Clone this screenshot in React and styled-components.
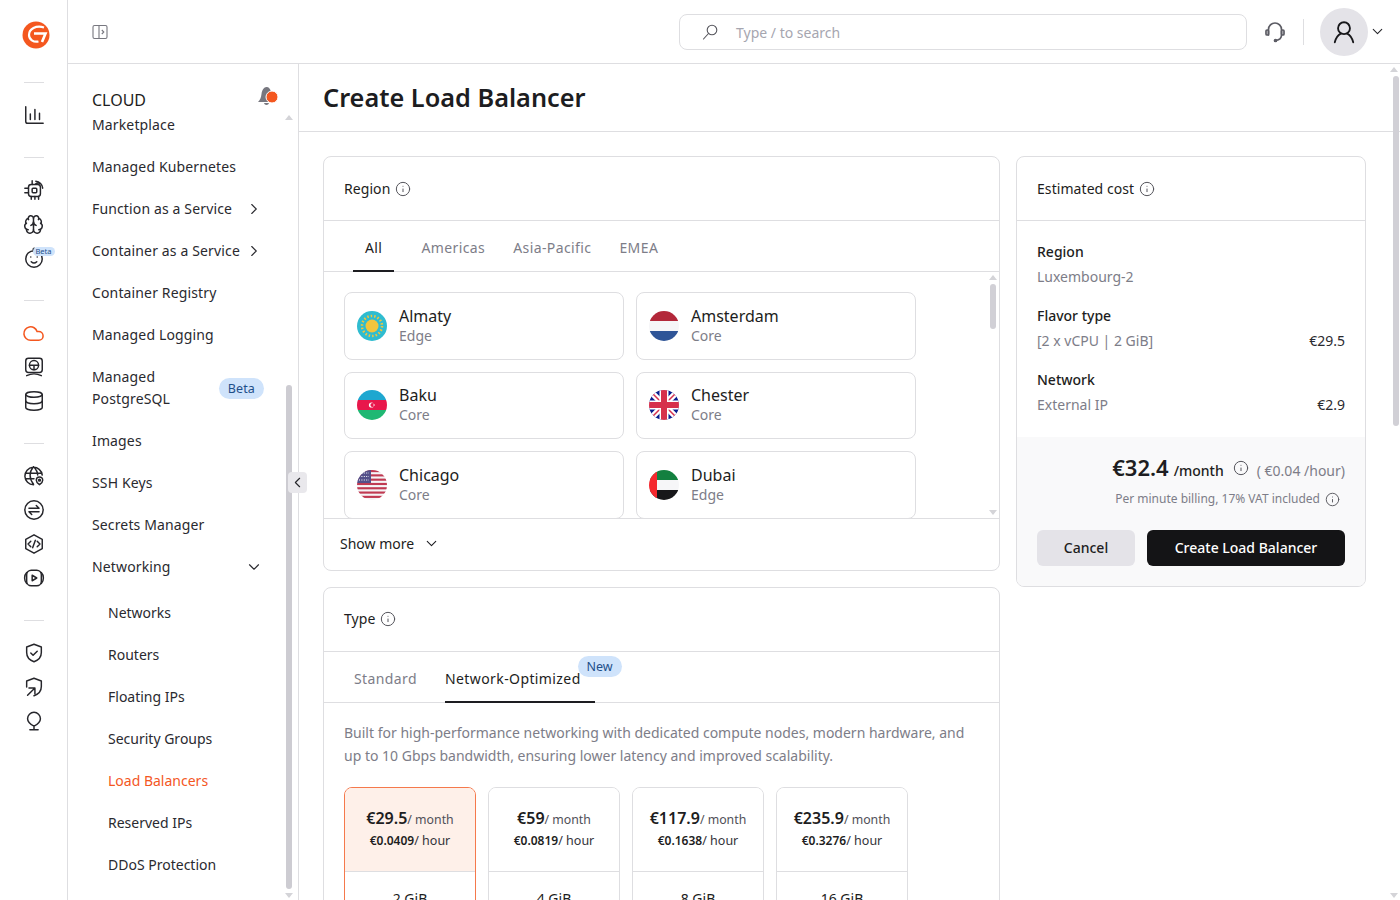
import React from "react";
import styled, { createGlobalStyle } from "styled-components";
import {
  Brain,
  ChevronDown,
  ChevronLeft,
  ChevronRight,
  Cloud,
  Database,
  Info,
} from "lucide-react";

const orange = "#f4571f";
const ink = "#1d1d21";
const muted = "#7d7d88";
const line = "#dedee1";

const GlobalStyle = createGlobalStyle`
  html, body { margin: 0; height: 100%; overflow: hidden; }
  body { font-family: "Noto Sans", "Open Sans", sans-serif; color: ${ink}; background: #fff; }
  * { box-sizing: border-box; }
`;

const Glyph = ({ children, size = 22, color = "#26262b", width = 1.6 }) => (
  <svg width={size} height={size} viewBox="0 0 24 24" fill="none" stroke={color} strokeWidth={width} strokeLinecap="round" strokeLinejoin="round">
    {children}
  </svg>
);

const railGroups = [
  [
    <Glyph key="chart"><path d="M3 3v16a2 2 0 0 0 2 2h17M8 17v-6M13 17V6M18 17v-7" /></Glyph>,
  ],
  [
    <Glyph key="chip"><rect x="6" y="6" width="13" height="13" rx="3" /><rect x="10" y="10" width="5" height="5" rx="1" /><path d="M2 10h4M2 15h4M9 19v3M13 19v3M17 19v3M10 6V2M14 2.500a8 8 0 0 1 7.500 7.500M14 5a5 5 0 0 1 5 0" /></Glyph>,
    <Brain key="brain" size={21} color="#26262b" strokeWidth={1.7} />,
    <Glyph key="baby"><circle cx="12" cy="13" r="9" /><path d="M9 16c2 2 4 2 6 0M8.500 11h.01M15.500 11h.01M12 4c-2-2 0-3 1-2" /></Glyph>,
  ],
  [
    <Cloud key="cloud" size={23} color={orange} strokeWidth={1.6} />,
    <Glyph key="monitor"><rect x="3" y="2.500" width="18" height="15.500" rx="3" /><circle cx="12" cy="10" r="5" /><path d="M7 10h10M12 10v5M4 21.500c5-2.500 11-2.500 16 0" /></Glyph>,
    <Database key="database" size={22} color="#26262b" strokeWidth={1.6} />,
  ],
  [
    <Glyph key="globe"><path d="M21 11a9.500 9.500 0 1 0-9.500 10.500M2.500 9h18M2.500 15H12M11.500 2c-5 5.500-5 13 0 19M11.500 2c3 3 4.500 6.500 4.500 9" /><path d="M18 21.500s-3.500-2.500-3.500-5a3.500 3.500 0 0 1 7 0c0 2.500-3.500 5-3.500 5z" /><circle cx="18" cy="16.500" r="1" /></Glyph>,
    <Glyph key="swap"><circle cx="12" cy="12" r="10" /><path d="M6.500 10h11l-3-3M17.500 14h-11l3 3" /></Glyph>,
    <Glyph key="code"><path d="M12 2l9 5v10l-9 5-9-5V7z" /><path d="M8.500 9l-3 3 3 3M15.500 9l3 3-3 3M13.500 8l-3 8" /></Glyph>,
    <Glyph key="play"><rect x="4" y="3.500" width="16" height="17" rx="5" /><path d="M10 9v6l5-3zM4 6c-3 3-3 9 0 12M20 6c3 3 3 9 0 12" /></Glyph>,
  ],
  [
    <Glyph key="shield"><path d="M12 2.500l8 3v6c0 5-3.500 8.500-8 10-4.500-1.500-8-5-8-10v-6z" /><path d="M8.500 12l2.500 2.500 4.500-4.500" /></Glyph>,
    <Glyph key="share"><path d="M4 12V5.500l8-3 8 3v6c0 5-3.500 8.500-8 10" /><path d="M5 21l8-8M6.500 13H13v6.500" /></Glyph>,
    <Glyph key="bulb"><path d="M12 2.500a7 7 0 0 0-7 7c0 3.500 3 6 7 8 4-2 7-4.500 7-8a7 7 0 0 0-7-7zM12 17.500v4M7.500 21.500h9" /></Glyph>,
  ],
];

const menu = [
  { label: "Managed Kubernetes" },
  { label: "Function as a Service", arrow: true },
  { label: "Container as a Service", arrow: true },
  { label: "Container Registry" },
  { label: "Managed Logging" },
  { label: "Managed PostgreSQL", beta: true },
  { label: "Images" },
  { label: "SSH Keys" },
  { label: "Secrets Manager" },
  { label: "Networking", open: true },
];

const subMenu = ["Networks", "Routers", "Floating IPs", "Security Groups", "Load Balancers", "Reserved IPs", "DDoS Protection"];

const KZ = () => (
  <svg viewBox="0 0 30 30" width="30" height="30">
    <rect width="30" height="30" fill="#2fbcd0" />
    <circle cx="15" cy="15" r="10" fill="none" stroke="#f2c53d" strokeWidth="2.500" strokeDasharray="1.500 2" />
    <circle cx="15" cy="15" r="6.500" fill="#f2c53d" />
  </svg>
);
const NL = () => (
  <svg viewBox="0 0 30 30" width="30" height="30">
    <rect width="30" height="10" fill="#b3283a" />
    <rect y="10" width="30" height="10" fill="#f6f6f8" />
    <rect y="20" width="30" height="10" fill="#2f5597" />
  </svg>
);
const AZ = () => (
  <svg viewBox="0 0 30 30" width="30" height="30">
    <rect width="30" height="10" fill="#1ea7d0" />
    <rect y="10" width="30" height="10" fill="#e8174b" />
    <rect y="20" width="30" height="10" fill="#1fb873" />
    <circle cx="14.500" cy="15" r="2.600" fill="#fff" />
    <circle cx="15.500" cy="15" r="2.100" fill="#e8174b" />
    <circle cx="17" cy="15" r="0.800" fill="#fff" />
  </svg>
);
const GB = () => (
  <svg viewBox="0 0 30 30" width="30" height="30">
    <rect width="30" height="30" fill="#0a1d8f" />
    <path d="M0 0l30 30M30 0L0 30" stroke="#fff" strokeWidth="6" />
    <path d="M0 0l30 30M30 0L0 30" stroke="#d6314e" strokeWidth="1.500" />
    <path d="M15 0v30M0 15h30" stroke="#fff" strokeWidth="9" />
    <path d="M15 0v30M0 15h30" stroke="#d6304c" strokeWidth="6" />
  </svg>
);
const US = () => (
  <svg viewBox="0 0 30 30" width="30" height="30">
    <rect width="30" height="30" fill="#f5f5f7" />
    {[0, 1, 2, 3, 4, 5, 6, 7].map((i) => (
      <rect key={i} y={i * 4.3} width="30" height="2.150" fill="#c03a52" />
    ))}
    <rect width="14" height="13" fill="#55508a" />
    <path d="M2 3h10M2 6.500h10M2 10h10" stroke="#fff" strokeWidth="1.200" strokeDasharray="1 1.400" />
  </svg>
);
const AE = () => (
  <svg viewBox="0 0 30 30" width="30" height="30">
    <rect width="30" height="10" fill="#13803f" />
    <rect y="10" width="30" height="10" fill="#f6f6f8" />
    <rect y="20" width="30" height="10" fill="#17171a" />
    <rect width="8" height="30" fill="#f5282e" />
  </svg>
);

const regions = [
  { name: "Almaty", tier: "Edge", Flag: KZ },
  { name: "Amsterdam", tier: "Core", Flag: NL },
  { name: "Baku", tier: "Core", Flag: AZ },
  { name: "Chester", tier: "Core", Flag: GB },
  { name: "Chicago", tier: "Core", Flag: US },
  { name: "Dubai", tier: "Edge", Flag: AE },
];

const plans = [
  { month: "€29.5", hour: "€0.0409", ram: "2 GiB", active: true },
  { month: "€59", hour: "€0.0819", ram: "4 GiB" },
  { month: "€117.9", hour: "€0.1638", ram: "8 GiB" },
  { month: "€235.9", hour: "€0.3276", ram: "16 GiB" },
];

const costs = [
  { title: "Region", value: "Luxembourg-2" },
  { title: "Flavor type", value: "[2 x vCPU | 2 GiB]", price: "€29.5" },
  { title: "Network", value: "External IP", price: "€2.9" },
];

export default function App() {
  return (
    <Page>
      <GlobalStyle />
      <Rail>
        <Logo>
          <svg width="30" height="30" viewBox="0 0 30 30">
            <circle cx="15" cy="15" r="13.500" fill={orange} />
            <path d="M23 7.500C15 5 8 9 8 15c0 4.500 4.500 7.500 9.500 6.500" stroke="#fff" strokeWidth="2.200" fill="none" />
            <path d="M13 13.500h11.500L21 22" stroke="#fff" strokeWidth="2.600" fill="none" />
          </svg>
        </Logo>
        {railGroups.map((group, g) => (
          <React.Fragment key={g}>
            <RailRule />
            {group.map((icon, i) => (
              <RailIcon key={i}>
                {icon}
                {g === 1 && i === 2 && <RailBeta>Beta</RailBeta>}
              </RailIcon>
            ))}
          </React.Fragment>
        ))}
      </Rail>
      <Column>
        <TopBar>
          <svg width="16" height="16" viewBox="0 0 16 16" fill="none" stroke="#77777f" strokeWidth="1.100">
            <rect x="1" y="1.500" width="14" height="13" rx="1.500" />
            <path d="M7 1.500v13M9.800 6l2 2-2 2" />
          </svg>
          <SearchBox>
            <svg width="18" height="18" viewBox="0 0 18 18" fill="none" stroke="#55555c" strokeWidth="1.100" strokeLinecap="round">
              <circle cx="11" cy="7" r="4.800" />
              <path d="M7.500 10.500L2.500 16" />
            </svg>
            <SearchText>Type / to search</SearchText>
          </SearchBox>
          <Headset>
            <Glyph size={24} color="#5c5c64" width={1.7}>
              <path d="M5.500 15V9.500a6.500 6.500 0 0 1 13 0V15c0 3-2 5-5.500 5.500" />
              <rect x="3" y="10" width="2.500" height="5" rx="1" />
              <rect x="18.500" y="10" width="2.500" height="5" rx="1" />
              <circle cx="12.500" cy="20.500" r="1" />
            </Glyph>
          </Headset>
          <BarRule />
          <Avatar>
            <Glyph size={26} color="#17171a" width={1.7}>
              <circle cx="12" cy="8.500" r="5.500" />
              <path d="M3.500 21.500c1-4 3.500-7 5.500-8M20.500 21.500c-1-4-3.500-7-5.500-8" />
            </Glyph>
          </Avatar>
          <ChevronDown size={17} strokeWidth={1.5} color="#26262b" />
        </TopBar>
        <Body>
          <Sidebar>
            <SideHead>
              CLOUD
              <BellBox>
                <svg width="20" height="20" viewBox="0 0 20 20">
                  <path d="M0 15c2-2 3-4 3.500-8C4 3 6 0 8.500 0s4 2 4.500 5l2 10zM6 16h5c-.5 2.500-4.500 2.500-5 0z" fill="#77777f" />
                  <circle cx="14" cy="10" r="6" fill={orange} stroke="#fff" strokeWidth="1" />
                </svg>
              </BellBox>
            </SideHead>
            <Marketplace>Marketplace</Marketplace>
            {menu.map((item) => (
              <MenuItem key={item.label}>
                <MenuLabel $narrow={item.beta}>{item.label}</MenuLabel>
                {item.arrow && <MenuChevron as={ChevronRight} size={18} strokeWidth={1.5} />}
                {item.beta && <BetaPill>Beta</BetaPill>}
                {item.open && <MenuChevron as={ChevronDown} size={18} strokeWidth={1.5} />}
              </MenuItem>
            ))}
            <SubList>
              {subMenu.map((label) => (
                <SubItem key={label} $active={label === "Load Balancers"}>{label}</SubItem>
              ))}
            </SubList>
            <ScrollArrow $x={217} $y={51} />
            <SideThumb />
            <ScrollArrow $x={217} $y={829} $down />
            <Collapse><ChevronLeft size={17} strokeWidth={1.6} /></Collapse>
          </Sidebar>
          <Main>
            <TitleBar>Create Load Balancer</TitleBar>
            <Content>
              <LeftColumn>
                <Card>
                  <CardHead>Region <InfoIcon size={16} strokeWidth={1.5} /></CardHead>
                  <Tabs $inset={29}>
                    <Tab $active $pad={12} $pull={1}>All</Tab>
                    <Tab>Americas</Tab>
                    <Tab>Asia-Pacific</Tab>
                    <Tab>EMEA</Tab>
                  </Tabs>
                  <RegionScroll>
                    <RegionGrid>
                      {regions.map(({ name, tier, Flag }) => (
                        <RegionCard key={name}>
                          <FlagCircle><Flag /></FlagCircle>
                          <RegionText>
                            <RegionName>{name}</RegionName>
                            <RegionTier>{tier}</RegionTier>
                          </RegionText>
                        </RegionCard>
                      ))}
                    </RegionGrid>
                    <ListArrow $top={3} />
                    <ListThumb />
                    <ListArrow $top={238} $down />
                  </RegionScroll>
                  <ShowMore>Show more <ChevronDown size={17} strokeWidth={1.5} /></ShowMore>
                </Card>
                <Card>
                  <CardHead $lift>Type <InfoIcon size={16} strokeWidth={1.5} /></CardHead>
                  <Tabs $inset={30}>
                    <Tab>Standard</Tab>
                    <BadgedTab $active>
                      Network-Optimized
                      <NewPill>New</NewPill>
                    </BadgedTab>
                  </Tabs>
                  <TypeBody>
                    <Lead>
                      Built for high-performance networking with dedicated compute nodes, modern hardware, and up to 10 Gbps bandwidth, ensuring lower latency and improved scalability.
                    </Lead>
                    <Plans>
                      {plans.map((plan) => (
                        <Plan key={plan.ram} $active={plan.active}>
                          <PlanTop $active={plan.active}>
                            <PlanMonth><strong>{plan.month}</strong>/ month</PlanMonth>
                            <PlanHour><b>{plan.hour}</b>/ hour</PlanHour>
                          </PlanTop>
                          <PlanRam>{plan.ram}</PlanRam>
                        </Plan>
                      ))}
                    </Plans>
                  </TypeBody>
                </Card>
              </LeftColumn>
              <CostCard>
                <CardHead>Estimated cost <InfoIcon size={16} strokeWidth={1.5} /></CardHead>
                <CostList>
                  {costs.map((cost) => (
                    <CostBlock key={cost.title}>
                      <CostTitle>{cost.title}</CostTitle>
                      <CostRow>
                        <span>{cost.value}</span>
                        {cost.price && <CostPrice>{cost.price}</CostPrice>}
                      </CostRow>
                    </CostBlock>
                  ))}
                </CostList>
                <CostFoot>
                  <Total>
                    <TotalValue>€32.4</TotalValue>
                    <TotalUnit>/month</TotalUnit>
                    <Info size={16} strokeWidth={1.5} color="#55555c" />
                    <TotalHour>( €0.04 /hour)</TotalHour>
                  </Total>
                  <Billing>
                    Per minute billing, 17% VAT included
                    <Info size={15} strokeWidth={1.5} color="#55555c" />
                  </Billing>
                  <Actions>
                    <CancelButton>Cancel</CancelButton>
                    <CreateButton>Create Load Balancer</CreateButton>
                  </Actions>
                </CostFoot>
              </CostCard>
            </Content>
            <ScrollArrow $x={1091} $y={3} />
            <MainThumb />
            <ScrollArrow $x={1091} $y={829} $down />
          </Main>
        </Body>
      </Column>
    </Page>
  );
}

const Page = styled.div`
  display: flex;
  width: 100%;
  height: 100vh;
  overflow: hidden;
`;

const Rail = styled.aside`
  flex: 0 0 68px;
  display: flex;
  flex-direction: column;
  align-items: center;
  padding-top: 16px;
  border-right: 1px solid ${line};
`;

const Logo = styled.div`
  height: 41px;
  display: flex;
  align-items: center;
  justify-content: center;
  margin: -2px 0 2px 4px;
`;

const RailRule = styled.div`
  width: 20px;
  height: 1px;
  margin: 25px 0 15px;
  background: ${line};
`;

const RailIcon = styled.div`
  position: relative;
  width: 34px;
  height: 34px;
  display: flex;
  align-items: center;
  justify-content: center;
`;

const RailBeta = styled.span`
  position: absolute;
  top: 6px;
  left: 16px;
  padding: 0 3px;
  border-radius: 5px;
  background: #cfe3fb;
  color: #1e4f8a;
  font-size: 7.5px;
  line-height: 9px;
`;

const Column = styled.div`
  flex: 1;
  min-width: 0;
  display: flex;
  flex-direction: column;
`;

const TopBar = styled.header`
  flex: 0 0 64px;
  display: flex;
  align-items: center;
  padding: 0 14px 0 24px;
  border-bottom: 1px solid ${line};
`;

const SearchBox = styled.div`
  flex: 0 0 568px;
  height: 36px;
  margin: 1px 0 0 571px;
  display: flex;
  align-items: center;
  padding-left: 21px;
  border: 1px solid ${line};
  border-radius: 8px;
`;

const SearchText = styled.span`
  margin-left: 17px;
  font-size: 14px;
  color: #a6a6b0;
`;

const Headset = styled.div`
  display: flex;
  margin-left: 16px;
`;

const BarRule = styled.div`
  width: 1px;
  height: 26px;
  margin: 0 16px;
  background: ${line};
`;

const Avatar = styled.div`
  width: 48px;
  height: 48px;
  margin-right: 1px;
  display: flex;
  align-items: center;
  justify-content: center;
  border-radius: 50%;
  background: #e4e3e8;
`;

const Body = styled.div`
  flex: 1;
  min-height: 0;
  display: flex;
`;

const Sidebar = styled.nav`
  position: relative;
  flex: 0 0 231px;
  padding: 25px 0 0 24px;
  border-right: 1px solid ${line};
  font-size: 14px;
  line-height: 22px;
  color: #2a2a2f;
`;

const SideHead = styled.div`
  position: relative;
  height: 22px;
  font-size: 16px;
  color: ${ink};
`;

const BellBox = styled.span`
  position: absolute;
  top: -2px;
  left: 166px;
`;

const Marketplace = styled.div`
  margin-top: 3px;
  letter-spacing: 0.14px;
`;

const MenuItem = styled.div`
  display: flex;
  align-items: center;
  justify-content: space-between;
  width: 172px;
  margin-top: 20px;
  letter-spacing: 0.14px;
`;

const MenuLabel = styled.span`
  width: ${(p) => (p.$narrow ? "100px" : "auto")};
  white-space: ${(p) => (p.$narrow ? "normal" : "nowrap")};
`;

const MenuChevron = styled.svg`
  margin-right: 1px;
`;

const BetaPill = styled.span`
  padding: 0 9px;
  border-radius: 11px;
  background: #cfe3fb;
  color: #1e4f8a;
  font-size: 12.5px;
  line-height: 21px;
`;

const SubList = styled.div`
  margin-top: 24px;
  padding-left: 16px;
  display: flex;
  flex-direction: column;
  gap: 20px;
`;

const SubItem = styled.div`
  color: ${(p) => (p.$active ? orange : "#2a2a2f")};
`;

const ScrollArrow = styled.span`
  position: absolute;
  left: ${(p) => p.$x}px;
  top: ${(p) => p.$y}px;
  width: 0;
  height: 0;
  border-left: 4px solid transparent;
  border-right: 4px solid transparent;
  ${(p) => (p.$down ? "border-top: 5px solid #d4d4d8;" : "border-bottom: 5px solid #d4d4d8;")}
`;

const SideThumb = styled.span`
  position: absolute;
  left: 218px;
  top: 321px;
  width: 6px;
  height: 504px;
  border-radius: 3px;
  background: #cdccd2;
`;

const Collapse = styled.button`
  position: absolute;
  top: 408px;
  left: 220px;
  width: 19px;
  height: 21px;
  padding: 0;
  display: flex;
  align-items: center;
  justify-content: center;
  border: 0;
  border-radius: 4px;
  background: #e9e8ec;
  color: #26262b;
`;

const Main = styled.main`
  position: relative;
  flex: 1;
  min-width: 0;
  overflow: hidden;
`;

const TitleBar = styled.h1`
  height: 68px;
  margin: 0;
  padding: 0 0 2px 24px;
  display: flex;
  align-items: center;
  border-bottom: 1px solid ${line};
  font-size: 25.3px;
  font-weight: 600;
  color: ${ink};
`;

const Content = styled.div`
  display: flex;
  align-items: flex-start;
  gap: 16px;
  padding: 24px 0 0 24px;
`;

const LeftColumn = styled.div`
  flex: 0 0 677px;
  display: flex;
  flex-direction: column;
  gap: 16px;
`;

const Card = styled.section`
  border: 1px solid ${line};
  border-radius: 8px;
  overflow: hidden;
`;

const CardHead = styled.div`
  height: 64px;
  display: flex;
  align-items: center;
  gap: 5px;
  padding: 0 0 ${(p) => (p.$lift ? "2px" : "0")} 20px;
  border-bottom: 1px solid ${line};
  font-size: 14px;
  letter-spacing: 0.07px;
`;

const InfoIcon = styled(Info)`
  color: #55555c;
`;

const Tabs = styled.div`
  height: 51px;
  display: flex;
  gap: 28px;
  padding-left: ${(p) => p.$inset}px;
  border-bottom: 1px solid ${line};
`;

const Tab = styled.div`
  position: relative;
  height: 51px;
  padding: 3px ${(p) => p.$pad || 0}px 0;
  margin-right: -${(p) => p.$pull || 0}px;
  display: flex;
  align-items: center;
  border-bottom: 2px solid ${(p) => (p.$active ? "#1d1d21" : "transparent")};
  font-size: 14px;
  letter-spacing: 0.4px;
  color: ${(p) => (p.$active ? ink : muted)};
`;

const BadgedTab = styled(Tab)`
  padding-right: 14px;
`;

const NewPill = styled.span`
  position: absolute;
  top: 4px;
  right: -27px;
  padding: 0 9px;
  border-radius: 11px;
  background: #cfe3fb;
  color: #1e4f8a;
  font-size: 12.5px;
  letter-spacing: 0;
  line-height: 21px;
`;

const RegionScroll = styled.div`
  position: relative;
  height: 247px;
  overflow: hidden;
  padding: 20px 0 0 20px;
  border-bottom: 1px solid ${line};
`;

const RegionGrid = styled.div`
  display: grid;
  grid-template-columns: 280px 280px;
  grid-auto-rows: 67.5px;
  gap: 12px;
`;

const RegionCard = styled.div`
  display: flex;
  align-items: center;
  gap: 12px;
  padding-left: 12px;
  border: 1px solid ${line};
  border-radius: 8px;
`;

const RegionText = styled.div`
  padding-bottom: 2px;
`;

const FlagCircle = styled.span`
  width: 30px;
  height: 30px;
  flex: none;
  display: block;
  overflow: hidden;
  border-radius: 50%;
`;

const RegionName = styled.div`
  font-size: 16px;
  line-height: 22px;
  color: ${ink};
`;

const RegionTier = styled.div`
  font-size: 14px;
  line-height: 18px;
  color: ${muted};
`;

const ListArrow = styled.span`
  position: absolute;
  right: 2px;
  top: ${(p) => p.$top}px;
  width: 0;
  height: 0;
  border-left: 4px solid transparent;
  border-right: 4px solid transparent;
  ${(p) => (p.$down ? "border-top: 5px solid #d4d4d8;" : "border-bottom: 5px solid #d4d4d8;")}
`;

const ListThumb = styled.span`
  position: absolute;
  top: 12px;
  right: 3px;
  width: 6px;
  height: 45px;
  border-radius: 3px;
  background: #d1d0d6;
`;

const ShowMore = styled.div`
  height: 51px;
  display: flex;
  align-items: center;
  gap: 9px;
  padding: 0 0 2px 16px;
  font-size: 14px;
`;

const TypeBody = styled.div`
  padding: 19px 20px 0;
`;

const Lead = styled.p`
  margin: 0 0 20px;
  max-width: 630px;
  font-size: 14px;
  line-height: 22.5px;
  color: ${muted};
`;

const Plans = styled.div`
  display: flex;
  gap: 12px;
`;

const Plan = styled.div`
  width: 132px;
  border: 1px solid ${(p) => (p.$active ? "#f5794c" : line)};
  border-radius: 8px;
  overflow: hidden;
`;

const PlanTop = styled.div`
  height: 84px;
  padding-top: 19px;
  text-align: center;
  border-bottom: 1px solid ${line};
  background: ${(p) => (p.$active ? "#fef0e9" : "#fff")};
`;

const PlanMonth = styled.div`
  font-size: 12.3px;
  line-height: 23px;
  color: #4f4f57;

  strong {
    font-size: 16px;
    font-weight: 600;
    color: ${ink};
  }
`;

const PlanHour = styled.div`
  font-size: 12.5px;
  line-height: 20px;
  color: #33333a;

  b {
    font-size: 12px;
    font-weight: 600;
    color: ${ink};
  }
`;

const PlanRam = styled.div`
  padding-top: 17px;
  text-align: center;
  font-size: 14px;
  line-height: 20px;
`;

const CostCard = styled.aside`
  flex: 0 0 350px;
  border: 1px solid ${line};
  border-radius: 8px;
  overflow: hidden;
`;

const CostList = styled.div`
  height: 216px;
  padding: 18px 20px 0;
  display: flex;
  flex-direction: column;
  gap: 14px;
`;

const CostBlock = styled.div`
  font-size: 14px;
  line-height: 25px;
`;

const CostTitle = styled.div`
  color: ${ink};
  font-weight: 500;
`;

const CostRow = styled.div`
  display: flex;
  justify-content: space-between;
  color: ${muted};
`;

const CostPrice = styled.span`
  color: #2a2a2f;
`;

const CostFoot = styled.div`
  height: 149px;
  padding: 15px 20px 0;
  background: #f9f9fa;
`;

const Total = styled.div`
  display: flex;
  align-items: center;
  justify-content: flex-end;
  height: 32px;
`;

const TotalValue = styled.span`
  margin-top: -2px;
  font-size: 22px;
  font-weight: 600;
`;

const TotalUnit = styled.span`
  margin: 4px 9px 0 5px;
  font-size: 14px;
  font-weight: 500;
`;

const TotalHour = styled.span`
  margin: 4px 0 0 8px;
  font-size: 14px;
  color: ${muted};
`;

const Billing = styled.div`
  display: flex;
  align-items: center;
  justify-content: flex-end;
  gap: 5px;
  margin-top: 3px;
  padding-right: 5px;
  font-size: 12px;
  line-height: 24px;
  color: ${muted};
`;

const Actions = styled.div`
  display: flex;
  gap: 12px;
  margin-top: 19px;
`;

const CancelButton = styled.button`
  width: 98px;
  height: 36px;
  padding: 0 0 2px;
  border: 0;
  border-radius: 6px;
  background: #e4e3e8;
  color: ${ink};
  font: 500 14px "Noto Sans", sans-serif;
`;

const CreateButton = styled.button`
  width: 198px;
  height: 36px;
  padding: 0 0 2px;
  border: 0;
  border-radius: 6px;
  background: #141416;
  color: #fff;
  font: 500 14px "Noto Sans", sans-serif;
`;

const MainThumb = styled.span`
  position: absolute;
  top: 12px;
  left: 1094px;
  width: 6px;
  height: 350px;
  border-radius: 3px;
  background: #d1d0d6;
`;
